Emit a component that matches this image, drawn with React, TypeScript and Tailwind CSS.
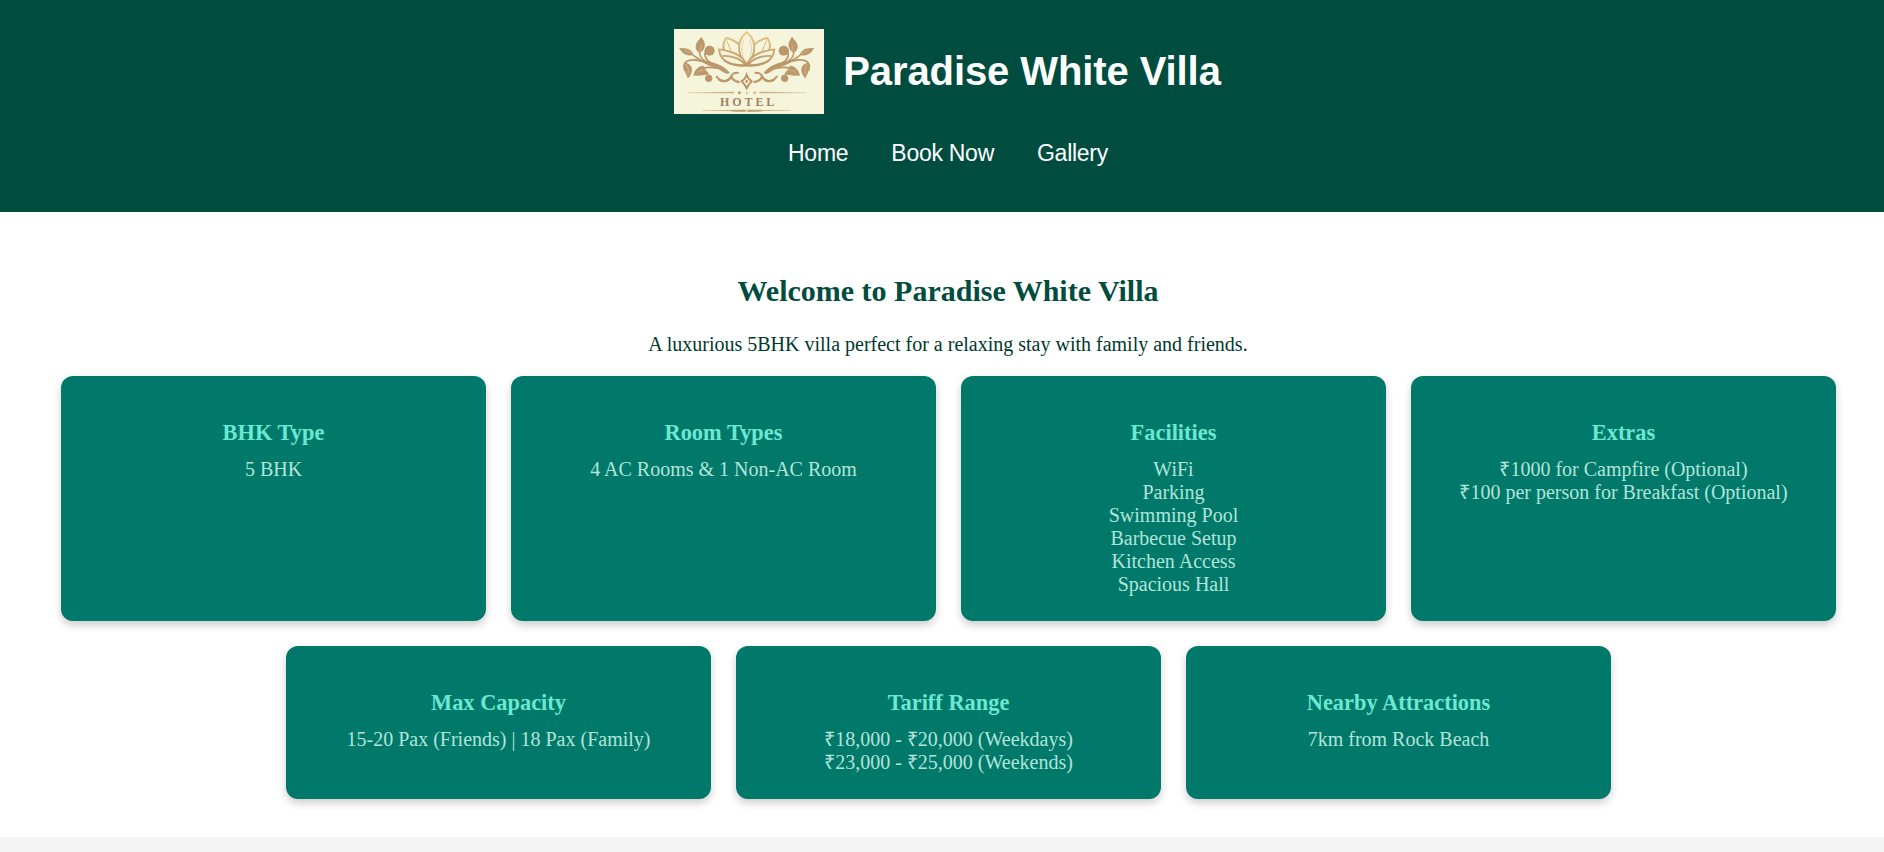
import type { ReactNode } from "react";

const navLinks = ["Home", "Book Now", "Gallery"];

const cards: { title: string; lines: string[] }[] = [
  { title: "BHK Type", lines: ["5 BHK"] },
  { title: "Room Types", lines: ["4 AC Rooms & 1 Non-AC Room"] },
  {
    title: "Facilities",
    lines: ["WiFi", "Parking", "Swimming Pool", "Barbecue Setup", "Kitchen Access", "Spacious Hall"],
  },
  {
    title: "Extras",
    lines: ["₹1000 for Campfire (Optional)", "₹100 per person for Breakfast (Optional)"],
  },
  { title: "Max Capacity", lines: ["15-20 Pax (Friends) | 18 Pax (Family)"] },
  {
    title: "Tariff Range",
    lines: ["₹18,000 - ₹20,000 (Weekdays)", "₹23,000 - ₹25,000 (Weekends)"],
  },
  { title: "Nearby Attractions", lines: ["7km from Rock Beach"] },
];

function Vine() {
  return (
    <g fill="#bb976a" stroke="#bb976a" strokeLinecap="round" strokeLinejoin="round">
      {/* leaves and berries */}
      <path strokeWidth="2.5" d="M60 85 C72 88 92 82 99 104 C84 108 66 102 60 85Z" />
      <path strokeWidth="2.5" d="M124 53 C138 68 136 88 119 98 C102 88 106 68 124 53Z" />
      <path strokeWidth="2.5" d="M78 130 C96 134 102 152 84 174 C82 162 66 150 78 130Z" />
      <path strokeWidth="2.5" d="M102 165 C106 144 124 136 132 140 C134 150 140 152 146 163 C134 162 122 168 102 165Z" />
      <circle cx="149" cy="92" r="15" stroke="none" />
      <circle cx="146" cy="175" r="11" stroke="none" />
      {/* stems */}
      <g fill="none">
        <path strokeWidth="5.5" d="M74 150 C66 126 84 117 108 120 C140 124 150 136 172 136" />
        <path
          d="M120 120 C150 128 184 130 208 158 C196 166 188 148 160 140 C146 136 134 130 120 120Z"
          fill="#bb976a"
          strokeWidth="3"
        />
        <path strokeWidth="4.5" d="M97 102 C104 112 118 118 132 124" />
        <path strokeWidth="4.5" d="M119 97 C119 108 124 116 134 122" />
        <path strokeWidth="5" d="M138 86 C130 108 138 122 158 131" />
        <path strokeWidth="5" d="M130 146 C150 136 168 148 190 145" />
        <path strokeWidth="6" d="M170 170 C186 192 206 182 212 172 C216 162 220 158 234 158" />
        <path strokeWidth="7" d="M178 179 C194 188 208 182 214 170 C218 180 226 184 236 186" />
        {/* leaf veins */}
        <g stroke="#f5f5dc" strokeWidth="1.4" opacity="0.7">
          <path d="M76 92 C86 94 92 98 97 103" />
          <path d="M124 72 C124 82 121 90 118 97" />
          <path d="M79 134 C86 144 86 154 84 162" />
          <path d="M112 160 C120 151 128 149 140 150" />
        </g>
      </g>
    </g>
  );
}

function Logo() {
  return (
    <svg viewBox="42 27 450 255" className="block h-[85px] w-[150px] bg-[#f5f5dc]" role="img">
      <defs>
        <linearGradient id="petal" gradientUnits="userSpaceOnUse" x1="0" y1="33" x2="0" y2="140">
          <stop offset="0" stopColor="#edcb8f" />
          <stop offset="0.5" stopColor="#d2ab74" />
          <stop offset="1" stopColor="#bb9566" />
        </linearGradient>
        <linearGradient id="rule" gradientUnits="userSpaceOnUse" x1="82" y1="0" x2="438" y2="0">
          <stop offset="0" stopColor="#e6dab6" />
          <stop offset="0.38" stopColor="#c8a97c" />
          <stop offset="0.5" stopColor="#b99263" />
          <stop offset="0.62" stopColor="#c8a97c" />
          <stop offset="1" stopColor="#e6dab6" />
        </linearGradient>
      </defs>
      <Vine />
      <g transform="translate(520 0) scale(-1 1)">
        <Vine />
      </g>
      {/* lotus */}
      <g fill="#f5f5dc" stroke="url(#petal)" strokeWidth="5.5" strokeLinejoin="round">
        <path d="M198 54 C214 57 230 66 240 76 L246 118 L196 96 C186 84 190 66 198 54Z" />
        <path d="M322 54 C306 57 290 66 280 76 L274 118 L324 96 C334 84 330 66 322 54Z" />
        <path d="M200 62 C206 74 210 86 214 94" fill="none" strokeWidth="3" />
        <path d="M320 62 C314 74 310 86 306 94" fill="none" strokeWidth="3" />
        <path d="M260 36 C244 50 234 72 238 94 C241 112 250 124 260 133 C270 124 279 112 282 94 C286 72 276 50 260 36Z" />
        <path
          d="M252 58 C243 80 244 100 252 116 M268 58 C277 80 276 100 268 116"
          fill="none"
          strokeWidth="2.5"
          opacity="0.6"
        />
        <path d="M177 88 C202 92 244 98 260 135 C224 142 180 128 177 88Z" />
        <path d="M343 88 C318 92 276 98 260 135 C296 142 340 128 343 88Z" />
        <path d="M187 108 C210 106 240 114 256 134" fill="none" />
        <path d="M333 108 C310 106 280 114 264 134" fill="none" />
        <path d="M192 121 C214 135 240 137 260 136 C280 137 306 135 328 121" fill="none" strokeWidth="6" />
      </g>
      {/* diamond ornament */}
      <g fill="none" stroke="#b99263" strokeWidth="6">
        <path d="M260 165 C263 174 269 180 275 184 C269 190 263 197 260 204 C257 197 251 190 245 184 C251 180 257 174 260 165Z" />
        <path d="M260 180 L264 184 L260 189 L256 184Z" fill="#b99263" strokeWidth="2" />
      </g>
      {/* rules and dots */}
      <g fill="url(#rule)">
        <path d="M82 217 L220 215.5 L223 218 L220 220 L82 219.5Z" />
        <path d="M438 217 L300 215.5 L297 218 L300 220 L438 219.5Z" />
        <path d="M126 270 L210 270 L220 269.5 H300 L312 270 L393 270 V272.5 L312 273 L300 275.5 H220 L210 273 L126 272.5Z" />
      </g>
      <circle cx="238" cy="218" r="4.5" fill="#c19a68" />
      <circle cx="261" cy="219" r="4" fill="#dfcca4" />
      <circle cx="284" cy="218" r="4.5" fill="#d8c298" />
      <circle cx="260" cy="272" r="4" fill="#f5f5dc" />
      <circle cx="260" cy="272" r="2.2" fill="#bd9460" />
      <text
        x="180"
        y="258"
        textLength="163"
        lengthAdjust="spacing"
        fill="#a5835f"
        fontSize="36"
        fontWeight="700"
        fontFamily="'Liberation Serif', serif"
      >
        HOTEL
      </text>
    </svg>
  );
}

function Card({ title, children }: { title: string; children: ReactNode }) {
  return (
    <div className="w-[425px] rounded-xl bg-[#00796b] px-5 pt-11 pb-[25px] shadow-[0_4px_8px_rgba(0,0,0,0.2)]">
      <h3 className="mb-3 text-[22.4px] leading-[26px] font-bold text-[#6ce8d2]">{title}</h3>
      <div className="text-[20px] leading-[23px] text-[#b2e4da]">{children}</div>
    </div>
  );
}

export default function App() {
  return (
    <div className="h-[852px] w-full overflow-hidden bg-[#f4f4f4] text-center font-['Liberation_Serif',serif]">
      <div className="w-[1897px]">
        <header className="h-[212px] bg-[#004d40] pt-[29px] font-['Liberation_Sans',sans-serif] text-white">
          <div className="flex items-center justify-center gap-[19px] pr-0.5">
            <Logo />
            <h1 className="pb-0.5 text-[40px] leading-[46px] font-bold tracking-[-0.09px]">
              Paradise White Villa
            </h1>
          </div>
          <nav className="mt-[26px] flex justify-center gap-[43px] pr-px text-[23px] leading-[27px] tracking-[-0.27px]">
            {navLinks.map((link) => (
              <a key={link} href="#">
                {link}
              </a>
            ))}
          </nav>
        </header>
        <main className="h-[625px] bg-white pt-[62px]">
          <h2 className="pr-px text-[30px] leading-[34px] font-bold text-[#004d40]">
            Welcome to Paradise White Villa
          </h2>
          <p className="mt-[25px] pr-px text-[20px] leading-[23px] text-[#00382e]">
            A luxurious 5BHK villa perfect for a relaxing stay with family and friends.
          </p>
          <section className="mt-5 flex flex-wrap justify-center gap-[25px]">
            {cards.map((card) => (
              <Card key={card.title} title={card.title}>
                {card.lines.map((line) => (
                  <p key={line}>{line}</p>
                ))}
              </Card>
            ))}
          </section>
        </main>
      </div>
    </div>
  );
}
